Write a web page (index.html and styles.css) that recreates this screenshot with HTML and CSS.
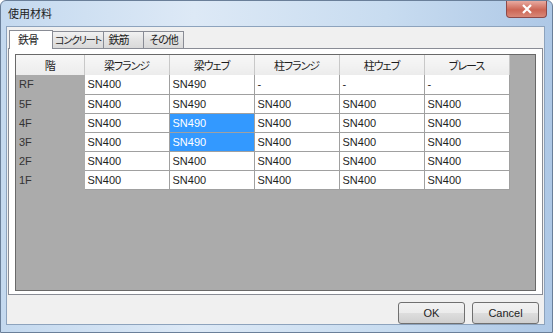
FILE: index.html
```html
<!DOCTYPE html>
<html lang="ja">
<head>
    <meta charset="UTF-8">
    <title>使用材料</title>
    <link rel="stylesheet" href="styles.css">
</head>
<body>
<div class="window">
    <div class="titlebar">
        <span class="title">使用材料</span>
        <span class="close">
            <svg width="14" height="10" viewBox="0 0 14 10"><path d="M3 1 L11 9 M11 1 L3 9" stroke="#fff" stroke-width="2.2"/></svg>
        </span>
    </div>
    <div class="client">
        <ul class="tabs">
            <li class="on">鉄骨</li>
            <li class="t2">コンクリート</li>
            <li class="t3">鉄筋</li>
            <li class="t4">その他</li>
        </ul>
        <div class="panel">
            <div class="grid">
                <table>
                    <tr class="head">
                        <th class="rh">階</th>
                        <th>梁フランジ</th>
                        <th>梁ウェブ</th>
                        <th>柱フランジ</th>
                        <th>柱ウェブ</th>
                        <th>ブレース</th>
                    </tr>
                    <tr>
                        <td class="rh">RF</td>
                        <td>SN400</td>
                        <td>SN490</td>
                        <td>-</td>
                        <td>-</td>
                        <td>-</td>
                    </tr>
                    <tr>
                        <td class="rh">5F</td>
                        <td>SN400</td>
                        <td>SN490</td>
                        <td>SN400</td>
                        <td>SN400</td>
                        <td>SN400</td>
                    </tr>
                    <tr>
                        <td class="rh">4F</td>
                        <td>SN400</td>
                        <td class="sel">SN490</td>
                        <td>SN400</td>
                        <td>SN400</td>
                        <td>SN400</td>
                    </tr>
                    <tr>
                        <td class="rh">3F</td>
                        <td>SN400</td>
                        <td class="sel">SN490</td>
                        <td>SN400</td>
                        <td>SN400</td>
                        <td>SN400</td>
                    </tr>
                    <tr>
                        <td class="rh">2F</td>
                        <td>SN400</td>
                        <td>SN400</td>
                        <td>SN400</td>
                        <td>SN400</td>
                        <td>SN400</td>
                    </tr>
                    <tr>
                        <td class="rh">1F</td>
                        <td>SN400</td>
                        <td>SN400</td>
                        <td>SN400</td>
                        <td>SN400</td>
                        <td>SN400</td>
                    </tr>
                </table>
            </div>
        </div>
        <div class="buttons">
            <button class="btn">OK</button>
            <button class="btn">Cancel</button>
        </div>
    </div>
</div>
</body>
</html>
```

FILE: styles.css
```css
html, body {
    margin: 0;
    padding: 0;
}

body {
    font-family: "Liberation Sans", "Noto Sans CJK JP", sans-serif;
    font-size: 11px;
    font-feature-settings: "palt";
    color: #1e1e1e;
    background: #fff;
}

ul, li {
    list-style-type: none;
    margin: 0;
    padding: 0;
}

.window {
    width: 553px;
    height: 333px;
    box-sizing: border-box;
    border: 1px solid #6a7f99;
    border-radius: 6px 6px 0 0;
    background: linear-gradient(to right, #c4d9ef 0%, #dde9f6 35%, #c8dcf0 70%, #aec8e6 100%);
    display: flex;
    flex-direction: column;
}

.titlebar {
    height: 25px;
    display: flex;
    justify-content: space-between;
    align-items: flex-start;
    padding: 0 5px 0 7px;
}

.title {
    font-size: 11px;
    line-height: 26px;
    color: #222;
}

.close {
    width: 41px;
    height: 17px;
    box-sizing: border-box;
    border: 1px solid #8c4a4a;
    border-top: 0;
    border-radius: 0 0 4px 4px;
    background: linear-gradient(#e8aaa0, #cc6655 55%, #d98878);
    display: flex;
    align-items: center;
    justify-content: center;
}

.client {
    flex: 1;
    margin: 0 7px 7px 5px;
    background: #f0f0f0;
    border: 1px solid #8da3bd;
    display: flex;
    flex-direction: column;
}

.tabs {
    display: flex;
    align-items: flex-end;
    height: 20px;
    padding-left: 2px;
    margin-top: 1px;
}

.tabs li {
    height: 17px;
    line-height: 17px;
    box-sizing: border-box;
    margin-right: -1px;
    border: 1px solid #898c95;
    border-bottom: 0;
    background: linear-gradient(#f2f2f2, #e3e3e3 50%, #d9d9d9);
    font-size: 11px;
    letter-spacing: -1px;
    text-align: center;
    white-space: nowrap;
    position: relative;
}

.tabs li.on {
    width: 44px;
    height: 19px;
    line-height: 19px;
    padding-right: 6px;
    background: #fff;
    z-index: 1;
    margin-bottom: -1px;
}

.tabs li.t2 {
    width: 52px;
    font-size: 10px;
    letter-spacing: -1.2px;
}

.tabs li.t3 {
    width: 41px;
    padding-right: 10px;
}

.tabs li.t4 {
    width: 41px;
}

.panel {
    height: 247px;
    box-sizing: border-box;
    margin: 0 1px 0 1px;
    border: 1px solid #898c95;
    background: #fff;
    padding: 5px 6px 3px 6px;
}

.grid {
    height: 100%;
    box-sizing: border-box;
    border: 1px solid #696969;
    background: #ababab;
}

table {
    border-collapse: collapse;
    table-layout: fixed;
}

th, td {
    width: 85px;
    height: 19px;
    padding: 0 0 0 3px;
    box-sizing: border-box;
    border-right: 1px solid #a0a0a0;
    border-bottom: 1px solid #a0a0a0;
    background: #fff;
    text-align: left;
    font-weight: normal;
    white-space: nowrap;
}

th {
    text-align: center;
    padding: 0;
    letter-spacing: -1px;
    background: linear-gradient(#f7f7f7, #ececec);
    border-right: 1px solid #c8c8c8;
    border-bottom: 0;
    height: 20px;
}

th.rh, td.rh {
    width: 68px;
}

td.rh {
    background: #ababab;
    border-right: 1px solid #ababab;
    border-bottom: 1px solid #ababab;
    color: #333;
}

td.sel {
    background: #3399ff;
    color: #fff;
}

.buttons {
    display: flex;
    justify-content: flex-end;
    gap: 7px;
    padding: 7px 5px 0 0;
}

.btn {
    width: 67px;
    height: 22px;
    border: 1px solid #707070;
    border-radius: 3px;
    background: linear-gradient(#f2f2f2 0%, #ebebeb 50%, #dddddd 51%, #cfcfcf 100%);
    font-family: "Liberation Sans", "Noto Sans CJK JP", sans-serif;
    font-size: 11px;
    color: #1e1e1e;
    padding: 0;
}
```
